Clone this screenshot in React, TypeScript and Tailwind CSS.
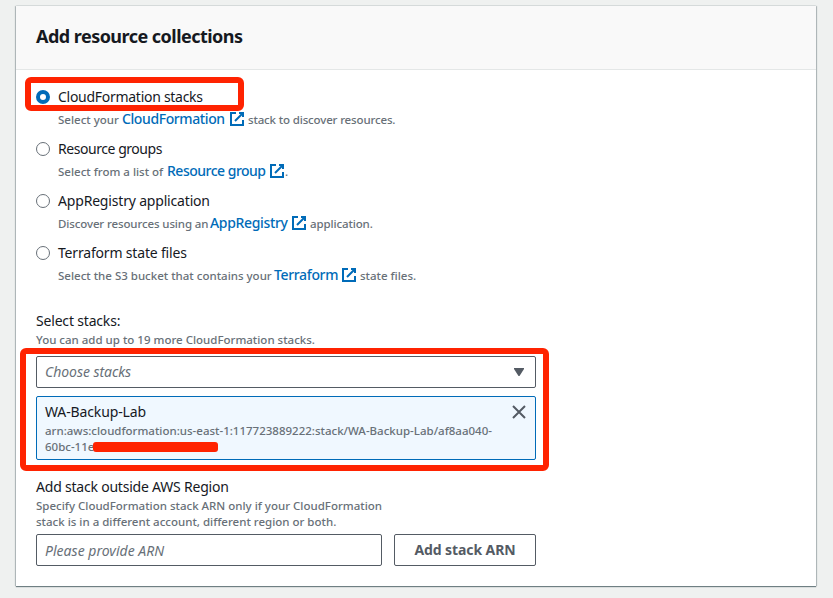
import type { ReactNode } from "react";

function ExternalIcon({ className = "" }: { className?: string }) {
  return (
    <svg viewBox="0 0 16 16" className={`h-4 w-4 shrink-0 fill-none stroke-[#006bb8] stroke-2 ${className}`}>
      <path d="M10 2h4v4M6 10l8-8" />
      <path d="M14 9.05V14H2V2h5" />
    </svg>
  );
}

interface OptionProps {
  label: string;
  labelClass: string;
  checked?: boolean;
  before: string;
  beforeClass: string;
  link: string;
  linkClass: string;
  after: string;
  afterClass: string;
}

function Option(p: OptionProps) {
  return (
    <div className="flex h-11 gap-2">
      <span
        className={`mt-1 h-3.5 w-3.5 shrink-0 rounded-full bg-white ${
          p.checked ? "border-[4.5px] border-[#006bb8]" : "border border-[#687078]"
        }`}
      />
      <div className="whitespace-pre">
        <div className="h-[22px] text-sm leading-[22px]">
          <span className={p.labelClass}>{p.label}</span>
        </div>
        <div className="flex h-[22px] items-baseline text-[11.5px] font-medium leading-[22px] text-[#687078]">
          <span className={p.beforeClass}>{p.before}</span>
          <span className={`text-sm font-medium leading-[22px] text-[#006bb8] ${p.linkClass}`}>{p.link}</span>
          <ExternalIcon className="ml-1 self-center" />
          <span className={p.afterClass}>{p.after}</span>
        </div>
      </div>
    </div>
  );
}

function Highlight({ className }: { className: string }) {
  return <div className={`pointer-events-none absolute border-[#ff2301] ${className}`} />;
}

function Hint({ children, className = "" }: { children: ReactNode; className?: string }) {
  return <div className={`h-4 whitespace-pre text-[11.5px] font-medium leading-4 text-[#687078] ${className}`}>{children}</div>;
}

const options: OptionProps[] = [
  {
    label: "CloudFormation stacks", labelClass: "tracking-[-0.28px]", checked: true,
    before: "Select your ", beforeClass: "w-16",
    link: "CloudFormation", linkClass: "w-[103px] tracking-[-0.4px]",
    after: "stack to discover resources.", afterClass: "ml-[3px] tracking-[-0.15px]",
  },
  {
    label: "Resource groups", labelClass: "tracking-[-0.45px]",
    before: "Select from a list of ", beforeClass: "w-[109px]",
    link: "Resource group", linkClass: "w-[98px] tracking-[-0.5px]",
    after: ".", afterClass: "",
  },
  {
    label: "AppRegistry application", labelClass: "tracking-[-0.18px]",
    before: "Discover resources using an ", beforeClass: "w-[152px] tracking-[-0.12px]",
    link: "AppRegistry", linkClass: "w-[77px] tracking-[-0.35px]",
    after: "application.", afterClass: "ml-[3px] tracking-[-0.12px]",
  },
  {
    label: "Terraform state files", labelClass: "tracking-[-0.18px]",
    before: "Select the S3 bucket that contains your ", beforeClass: "w-[216px]",
    link: "Terraform", linkClass: "w-[63px] tracking-[-0.35px]",
    after: "state files.", afterClass: "ml-[3px]",
  },
];

export default function App() {
  return (
    <div className="relative h-[598px] w-[833px] overflow-hidden bg-[#eff1f0] px-4 pt-1.5 font-['Noto_Sans',sans-serif] text-[#16191f]">
      <main className="h-[580px] w-[800px] bg-white shadow-[0_1px_1px_0_rgba(0,28,36,0.5),1px_0_1px_0_rgba(0,28,36,0.2),-1px_0_1px_0_rgba(0,28,36,0.2),0_-1px_0_0_#e4e7e7]">
        <header className="flex h-16 items-center border-b border-[#e4e7e7] bg-[#f9f9f9] px-5 pb-1">
          <h2 className="text-lg font-bold leading-6 tracking-[-0.53px]">Add resource collections</h2>
        </header>
        <div className="px-5 pt-4">
          <div className="flex flex-col gap-2">
            {options.map((o) => <Option key={o.label} {...o} />)}
          </div>

          <section className="mt-6 w-[500px]">
            <div className="h-[22px] text-sm leading-[22px] tracking-[-0.18px]">Select stacks:</div>
            <Hint>You can add up to 19 more CloudFormation stacks.</Hint>
            <div className="mt-2 flex h-8 items-center justify-between rounded-[2px] border border-[#545b64] px-2">
              <span className="text-sm italic tracking-[-0.05px] text-[#687078]">Choose stacks</span>
              <svg viewBox="0 0 16 16" className="h-4 w-4 fill-[#545b64]"><path d="M3 4h10v1L8.5 12h-1L3 5z" /></svg>
            </div>
            <div className="mt-2 flex h-16 justify-between rounded-[2px] border border-[#006bb8] bg-[#f0f8ff] px-2 pt-1">
              <div>
                <div className="h-[22px] text-sm leading-[22px] tracking-[-0.13px]">WA-Backup-Lab</div>
                <Hint>arn:aws:cloudformation:us-east-1:117723889222:stack/WA-Backup-Lab/af8aa040-</Hint>
                <Hint>60bc-11e</Hint>
              </div>
              <svg viewBox="0 0 16 16" className="mt-[3px] h-4 w-4 fill-none stroke-[#545b64] stroke-2"><path d="M2 2l12 12M14 2L2 14" /></svg>
            </div>
          </section>

          <section className="mt-4 w-[500px]">
            <div className="h-[22px] text-sm leading-[22px] tracking-[-0.21px]">Add stack outside AWS Region</div>
            <Hint>Specify CloudFormation stack ARN only if your CloudFormation</Hint>
            <Hint>stack is in a different account, different region or both.</Hint>
            <div className="mt-1 flex gap-3">
              <div className="flex h-8 w-[346px] items-center rounded-[2px] border border-[#545b64] px-2 pt-px text-sm italic tracking-[0.02px] text-[#687078]">
                Please provide ARN
              </div>
              <button className="h-8 w-[142px] rounded-[2px] border border-[#545b64] text-sm font-bold tracking-[-0.1px] text-[#545b64]">
                Add stack ARN
              </button>
            </div>
          </section>
        </div>
      </main>

      <Highlight className="left-[25px] top-[77px] h-[34px] w-[219px] rounded-[6px] border-[6px]" />
      <Highlight className="left-5 top-[348px] h-[123px] w-[529px] rounded-[6px] border-[6px]" />
      <div className="absolute left-[93px] top-[442px] h-[10px] w-[125px] rounded-[3px] bg-[#ff2301]" />
    </div>
  );
}
